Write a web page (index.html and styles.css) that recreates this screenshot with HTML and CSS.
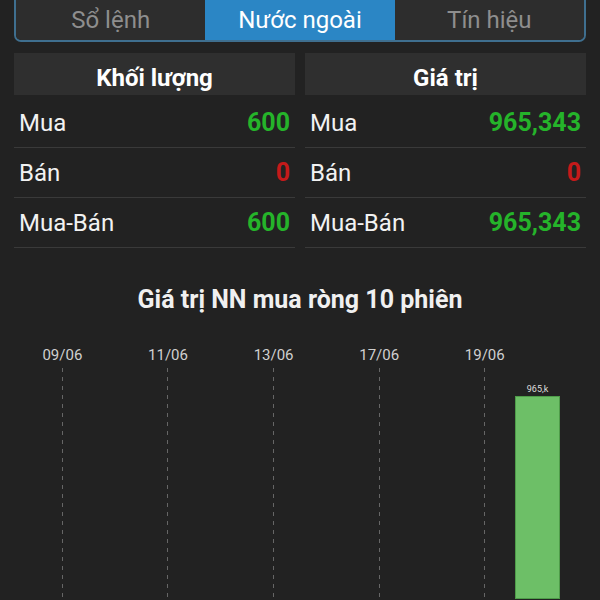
FILE: index.html
```html
<!DOCTYPE html>
<html lang="vi">
<head>
  <meta charset="UTF-8">
  <title>Nước ngoài</title>
  <link rel="stylesheet" href="styles.css">
</head>
<body>
  <div class="tabs">
    <div class="tab">Sổ lệnh</div>
    <div class="tab active">Nước ngoài</div>
    <div class="tab">Tín hiệu</div>
  </div>

  <div class="tables">
    <div class="table">
      <div class="table-head">Khối lượng</div>
      <div class="row"><span>Mua</span><span class="val up">600</span></div>
      <div class="row"><span>Bán</span><span class="val down">0</span></div>
      <div class="row"><span>Mua-Bán</span><span class="val up">600</span></div>
    </div>
    <div class="table">
      <div class="table-head">Giá trị</div>
      <div class="row"><span>Mua</span><span class="val up">965,343</span></div>
      <div class="row"><span>Bán</span><span class="val down">0</span></div>
      <div class="row"><span>Mua-Bán</span><span class="val up">965,343</span></div>
    </div>
  </div>

  <div class="chart">
    <h3 class="chart-title">Giá trị NN mua ròng 10 phiên</h3>
    <div class="cols">
      <div class="col marked"><div class="date">09/06</div><div class="plot"></div></div>
      <div class="col"><div class="date"></div><div class="plot"></div></div>
      <div class="col marked"><div class="date">11/06</div><div class="plot"></div></div>
      <div class="col"><div class="date"></div><div class="plot"></div></div>
      <div class="col marked"><div class="date">13/06</div><div class="plot"></div></div>
      <div class="col"><div class="date"></div><div class="plot"></div></div>
      <div class="col marked"><div class="date">17/06</div><div class="plot"></div></div>
      <div class="col"><div class="date"></div><div class="plot"></div></div>
      <div class="col marked"><div class="date">19/06</div><div class="plot"></div></div>
      <div class="col">
        <div class="date"></div>
        <div class="plot">
          <div class="bar-label">965,k</div>
          <div class="bar" style="height: 203px"></div>
        </div>
      </div>
    </div>
  </div>
</body>
</html>
```

FILE: styles.css
```css
html, body {
  height: 600px;
  overflow: hidden;
}
body {
  margin: 0;
  background-color: #222;
  color: #eee;
  font-family: Roboto, "Noto Sans", sans-serif;
}

/* tabs */
.tabs {
  display: flex;
  height: 42px;
  box-sizing: border-box;
  margin: 0 14px;
  border: 2px solid #3f6f8f;
  border-top: none;
  border-radius: 0 0 7px 7px;
  overflow: hidden;
}
.tab {
  flex: 1;
  background-color: #2d2d2d;
  color: #8e8e8e;
  font-size: 24px;
  text-align: center;
  line-height: 40px;
}
.tab.active {
  background-color: #2b86c5;
  color: #fff;
}

/* tables */
.tables {
  display: grid;
  grid-template-columns: 1fr 1fr;
  gap: 10px;
  margin: 11px 14px 0;
}
.table-head {
  height: 42px;
  box-sizing: border-box;
  padding-top: 7px;
  line-height: 36px;
  margin-bottom: 3px;
  background-color: #2f2f2f;
  color: #fff;
  font-size: 24px;
  font-weight: bold;
  text-align: center;
}
.row {
  display: flex;
  justify-content: space-between;
  align-items: center;
  height: 50px;
  box-sizing: border-box;
  padding: 0 5px;
  border-bottom: 1px solid #3a3a3a;
  font-size: 24px;
  color: #f2f2f2;
}
.val {
  font-weight: bold;
  font-size: 25px;
}
.up {
  color: #25b42a;
}
.down {
  color: #c41a1a;
}

/* chart */
.chart-title {
  margin: 37px 0 0;
  height: 30px;
  line-height: 30px;
  text-align: center;
  font-size: 25px;
  font-weight: bold;
  color: #f0f0f0;
}
.cols {
  display: flex;
  padding: 0 36px;
  margin-top: 31px;
}
.col {
  flex: 1;
  display: flex;
  flex-direction: column;
  align-items: center;
}
.date {
  height: 18px;
  line-height: 18px;
  margin-bottom: 4px;
  font-size: 15px;
  color: #d0d0d0;
  white-space: nowrap;
}
.plot {
  align-self: stretch;
  height: 240px;
  box-sizing: border-box;
  padding-top: 16px;
  display: flex;
  flex-direction: column;
  align-items: center;
}
.col.marked .plot {
  padding-top: 0;
  background-image: repeating-linear-gradient(to bottom, #666 0 4px, transparent 4px 9px);
  background-size: 1px 100%;
  background-position: center top;
  background-repeat: no-repeat;
}
.bar-label {
  font-size: 9px;
  color: #ddd;
  margin-bottom: 2px;
}
.bar {
  width: 45px;
  box-sizing: border-box;
  background-color: #6dbf67;
  border: 1px solid #4e9c49;
}
```
